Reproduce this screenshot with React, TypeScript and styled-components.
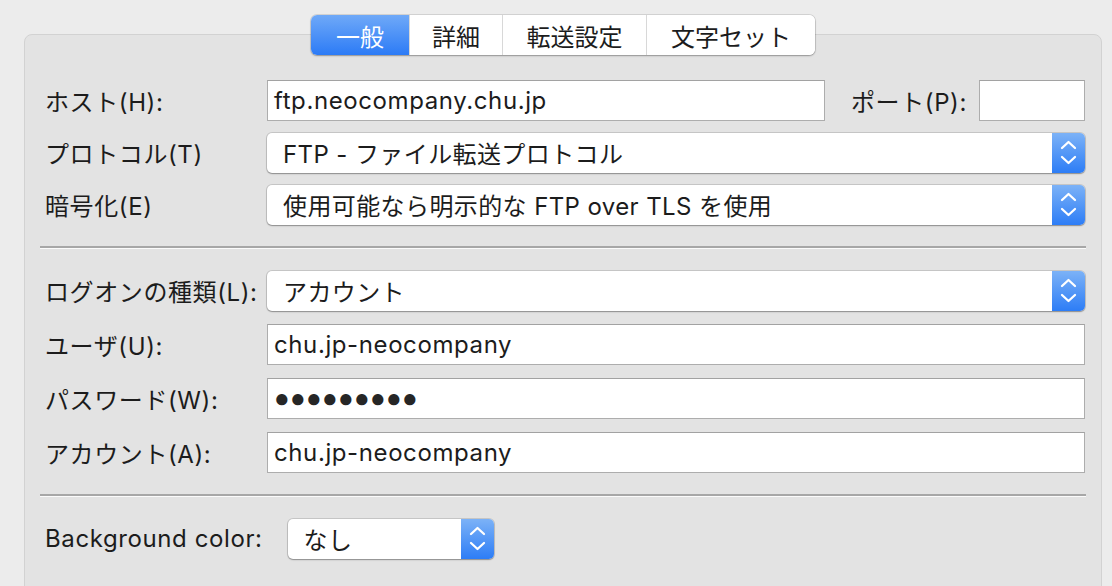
import React from "react";
import styled, { createGlobalStyle } from "styled-components";

const GlobalStyle = createGlobalStyle`
  html, body {
    margin: 0;
    padding: 0;
    background: #ececec;
  }
  body {
    font-family: Inter, "Noto Sans CJK JP", sans-serif;
    color: #1c1c1c;
    -webkit-font-smoothing: antialiased;
  }
`;

const Window = styled.div`
  width: 1112px;
  height: 586px;
  overflow: hidden;
  box-sizing: border-box;
  padding: 34px 10px 0 24px;
`;

const Panel = styled.div`
  position: relative;
  background: #e3e3e3;
  border: 1px solid #d2d2d2;
  border-radius: 8px;
  padding: 45px 15px 80px 15px;
`;

const TabBar = styled.div`
  position: absolute;
  top: -20px;
  left: 50%;
  transform: translateX(-50%);
  display: flex;
  height: 40px;
  background: #fff;
  border-radius: 6px;
  box-shadow: 0 0 0 1px rgba(0, 0, 0, 0.1), 0 1px 2px rgba(0, 0, 0, 0.28);
  overflow: hidden;
`;

const Tab = styled.div<{ $w: number; $active?: boolean }>`
  width: ${(p) => p.$w}px;
  display: flex;
  align-items: center;
  justify-content: center;
  font-family: "Noto Sans CJK JP", sans-serif;
  font-size: 24px;
  color: ${(p) => (p.$active ? "#ffffff" : "#1c1c1c")};
  background: ${(p) =>
    p.$active ? "linear-gradient(to bottom, #6fa9f8, #2c7bf6)" : "#ffffff"};
  & + & {
    border-left: 1px solid #d8d8d8;
  }
`;

const Form = styled.div`
  display: flex;
  flex-direction: column;
  gap: 21px;
`;

const Section = styled.div<{ $gap: number }>`
  display: flex;
  flex-direction: column;
  gap: ${(p) => p.$gap}px;
`;

const Row = styled.div`
  display: flex;
  align-items: center;
  height: 41px;
  padding: 0 1px 0 5px;
`;

const Label = styled.span<{ $w?: number; $grow?: boolean; $ml?: number; $mr?: number }>`
  flex: ${(p) => (p.$w ? `0 0 ${p.$w}px` : p.$grow ? "1 1 auto" : "0 0 auto")};
  margin-left: ${(p) => p.$ml ?? 0}px;
  margin-right: ${(p) => p.$mr ?? 0}px;
  font-size: 24px;
  letter-spacing: 0.6px;
  white-space: nowrap;
`;

const Field = styled.div<{ $w?: number }>`
  flex: ${(p) => (p.$w ? `0 0 ${p.$w}px` : "1 1 auto")};
  min-width: 0;
  height: 41px;
  box-sizing: border-box;
  display: flex;
  align-items: center;
  background: #fff;
  border: 1px solid #adadad;
  border-top-color: #a2a2a2;
  padding: 0 6px;
  font-size: 24px;
  letter-spacing: 0.6px;
  white-space: nowrap;
`;

const Dots = styled.span`
  font-family: "Liberation Sans", sans-serif;
  font-size: 26px;
  letter-spacing: 0.3px;
  color: #262626;
`;

const Select = styled.div<{ $w?: number }>`
  flex: ${(p) => (p.$w ? `0 0 ${p.$w}px` : "1 1 auto")};
  height: 40px;
  display: flex;
  align-items: center;
  background: #fff;
  border-radius: 5px;
  box-shadow: 0 0 0 1px rgba(0, 0, 0, 0.12), 0 1px 1.5px rgba(0, 0, 0, 0.3);
  overflow: hidden;
`;

const SelectValue = styled.span`
  flex: 1 1 auto;
  padding-left: 16px;
  font-size: 24px;
  letter-spacing: 0.4px;
  white-space: nowrap;
`;

const Stepper = styled.span`
  flex: 0 0 33px;
  align-self: stretch;
  display: flex;
  align-items: center;
  justify-content: center;
  background: linear-gradient(to bottom, #7cb2f7, #2d7df6);
`;

const Separator = styled.div`
  height: 2px;
  background: #a7a7a7;
  border-bottom: 1px solid #fbfbfb;
`;

const StepperIcon = () => (
  <svg width="33" height="40" viewBox="0 0 33 40">
    <path
      d="M10 15 L16.5 9 L23 15"
      fill="none"
      stroke="#fff"
      strokeWidth="2.3"
      strokeLinecap="round"
      strokeLinejoin="round"
    />
    <path
      d="M10 24 L16.5 30 L23 24"
      fill="none"
      stroke="#fff"
      strokeWidth="2.3"
      strokeLinecap="round"
      strokeLinejoin="round"
    />
  </svg>
);

const PopUp = ({ value, w }: { value: string; w?: number }) => (
  <Select $w={w}>
    <SelectValue>{value}</SelectValue>
    <Stepper>
      <StepperIcon />
    </Stepper>
  </Select>
);

const LABEL_W = 222;

export default function App() {
  return (
    <>
      <GlobalStyle />
      <Window>
        <Panel>
          <TabBar>
            <Tab $w={98} $active>
              一般
            </Tab>
            <Tab $w={92}>詳細</Tab>
            <Tab $w={143}>転送設定</Tab>
            <Tab $w={168}>文字セット</Tab>
          </TabBar>
          <Form>
            <Section $gap={11}>
              <Row>
                <Label $w={LABEL_W}>ホスト(H):</Label>
                <Field $w={558}>ftp.neocompany.chu.jp</Field>
                <Label $grow $ml={26}>
                  ポート(P):
                </Label>
                <Field $w={106} />
              </Row>
              <Row>
                <Label $w={LABEL_W}>プロトコル(T)</Label>
                <PopUp value="FTP - ファイル転送プロトコル" />
              </Row>
              <Row>
                <Label $w={LABEL_W}>暗号化(E)</Label>
                <PopUp value="使用可能なら明示的な FTP over TLS を使用" />
              </Row>
            </Section>
            <Separator />
            <Section $gap={13}>
              <Row>
                <Label $w={LABEL_W}>ログオンの種類(L):</Label>
                <PopUp value="アカウント" />
              </Row>
              <Row>
                <Label $w={LABEL_W}>ユーザ(U):</Label>
                <Field>chu.jp-neocompany</Field>
              </Row>
              <Row>
                <Label $w={LABEL_W}>パスワード(W):</Label>
                <Field>
                  <Dots>●●●●●●●●●</Dots>
                </Field>
              </Row>
              <Row>
                <Label $w={LABEL_W}>アカウント(A):</Label>
                <Field>chu.jp-neocompany</Field>
              </Row>
            </Section>
            <Separator />
            <Section $gap={0}>
              <Row>
                <Label $mr={25}>Background color:</Label>
                <PopUp value="なし" w={206} />
              </Row>
            </Section>
          </Form>
        </Panel>
      </Window>
    </>
  );
}
